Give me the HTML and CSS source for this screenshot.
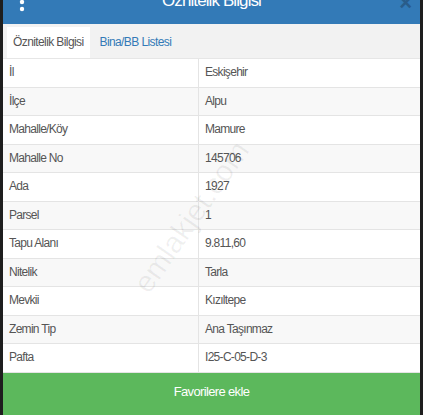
FILE: index.html
```html
<!DOCTYPE html>
<html lang="tr">
<head>
    <meta charset="UTF-8">
    <meta name="viewport" content="width=device-width, initial-scale=1.0">
    <title>Öznitelik Bilgisi</title>
    <link rel="stylesheet" href="styles.css">
</head>
<body>
    <div class="modal">
        <div class="modal-header">
            <svg class="menu-icon" width="6" height="20" viewBox="0 0 6 20">
                <circle cx="3" cy="2" r="2.2" fill="#fff"/>
                <circle cx="3" cy="9" r="2.2" fill="#fff"/>
            </svg>
            <h1 class="modal-title">Öznitelik Bilgisi</h1>
            <span class="close">&times;</span>
        </div>
        <div class="tabs">
            <div class="tab active">Öznitelik Bilgisi</div>
            <div class="tab">Bina/BB Listesi</div>
        </div>
        <table class="info-table">
            <tr><td>İl</td><td>Eskişehir</td></tr>
            <tr><td>İlçe</td><td>Alpu</td></tr>
            <tr><td>Mahalle/Köy</td><td>Mamure</td></tr>
            <tr><td>Mahalle No</td><td>145706</td></tr>
            <tr><td>Ada</td><td>1927</td></tr>
            <tr><td>Parsel</td><td>1</td></tr>
            <tr><td>Tapu Alanı</td><td>9.811,60</td></tr>
            <tr><td>Nitelik</td><td>Tarla</td></tr>
            <tr><td>Mevkii</td><td>Kızıltepe</td></tr>
            <tr><td>Zemin Tip</td><td>Ana Taşınmaz</td></tr>
            <tr><td>Pafta</td><td>I25-C-05-D-3</td></tr>
        </table>
        <button class="fav-button">Favorilere ekle</button>
        <div class="watermark">emlakjet.com</div>
    </div>
</body>
</html>
```

FILE: styles.css
```css
html, body {
    margin: 0;
    padding: 0;
    background-color: #1e1e1e;
    height: 415px;
    overflow: hidden;
}
body {
    font-family: "Liberation Sans", Arial, sans-serif;
}
.modal {
    position: relative;
    margin: 0 3px;
    background-color: #fff;
    height: 415px;
    overflow: hidden;
    display: flex;
    flex-direction: column;
}
.modal-header {
    position: relative;
    margin-top: -22px;
    height: 46px;
    background-color: #337ab7;
    display: flex;
    align-items: center;
    justify-content: center;
    flex-shrink: 0;
}
.menu-icon {
    position: absolute;
    left: 16px;
    top: 22px;
}
.modal-title {
    margin: 0;
    font-size: 17px;
    letter-spacing: -0.9px;
    font-weight: normal;
    color: #fff;
    line-height: 46px;
}
.close {
    position: absolute;
    right: 8px;
    top: 12px;
    font-size: 22px;
    font-weight: bold;
    color: #27557f;
    opacity: 0.8;
}
.tabs {
    display: flex;
    background-color: #f2f2f2;
    padding: 3px 4px 0;
    height: 31px;
    border-bottom: 1px solid #e6e6e6;
    flex-shrink: 0;
}
.tab {
    font-size: 12px;
    letter-spacing: -0.6px;
    line-height: 31px;
    padding: 0 6px;
    color: #337ab7;
}
.tab.active {
    background-color: #fff;
    color: #555;
    margin-right: 4px;
}
.info-table {
    width: 100%;
    border-collapse: collapse;
    font-size: 12px;
    color: #555;
    flex-shrink: 0;
}
.info-table td {
    padding: 5px 6px;
    line-height: 17.5px;
    letter-spacing: -0.7px;
    border-bottom: 1px solid #e4e4e4;
}
.info-table td:first-child {
    width: 183px;
    border-right: 1px solid #e4e4e4;
}
.info-table tr:nth-child(even) td {
    background-color: #f8f8f8;
}
.fav-button {
    flex: 1;
    border: none;
    background-color: #5cb85c;
    color: #fff;
    font-family: "Liberation Sans", Arial, sans-serif;
    font-size: 13px;
    letter-spacing: -0.65px;
    cursor: pointer;
    padding: 0 0 4px;
}
.watermark {
    position: absolute;
    left: 100px;
    top: 200px;
    font-size: 30px;
    color: rgba(0, 0, 0, 0.06);
    transform: rotate(-55deg);
    pointer-events: none;
}
```
